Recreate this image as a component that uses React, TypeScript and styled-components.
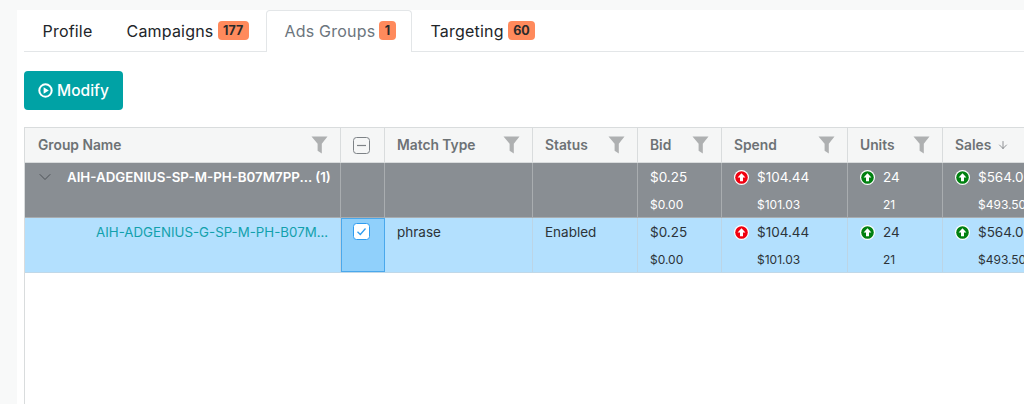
import { createGlobalStyle } from "styled-components";
import styled from "styled-components";
import { ChevronDown, ArrowDown } from "lucide-react";

const GlobalStyle = createGlobalStyle`
  html, body {
    margin: 0;
    padding: 0;
    background: #f8f9f9;
  }
  * {
    box-sizing: border-box;
  }
`;

const Page = styled.div`
  width: 1024px;
  height: 404px;
  overflow: hidden;
  padding: 17px 0 0 17px;
  font-family: Inter, "Liberation Sans", sans-serif;
`;

const Panel = styled.div`
  width: 1100px;
  height: 400px;
  background: #fff;
  padding-left: 7px;
`;

const TabBar = styled.div`
  display: flex;
  height: 42px;
  margin-top: -7px;
  border-bottom: 1px solid #e3e6e8;
  align-items: stretch;
`;

const Tab = styled.div<{ $active?: boolean; $w: number }>`
  width: ${(p) => p.$w}px;
  height: 42px;
  display: flex;
  align-items: center;
  gap: 4px;
  padding: 0 0 2px 17.5px;
  font-size: 16px;
  letter-spacing: 0.2px;
  color: ${(p) => (p.$active ? "#6c757d" : "#212529")};
  background: ${(p) => (p.$active ? "#fff" : "transparent")};
  border: 1px solid ${(p) => (p.$active ? "#e3e6e8" : "transparent")};
  border-bottom: none;
  border-radius: 4px 4px 0 0;
`;

const Badge = styled.span`
  height: 19px;
  padding: 0 5.5px;
  display: flex;
  align-items: center;
  background: #ff8a5c;
  border-radius: 4px;
  color: #2b2b2b;
  font-size: 12.5px;
  font-weight: 700;
  letter-spacing: 0;
`;

const Toolbar = styled.div`
  padding: 19px 0 17px;
`;

const ModifyButton = styled.button`
  width: 99px;
  height: 39px;
  display: flex;
  align-items: center;
  justify-content: center;
  gap: 4px;
  border: none;
  border-radius: 4px;
  background: #00a2a5;
  color: #fff;
  font-family: inherit;
  font-size: 15.5px;
  font-weight: 500;
`;

const Table = styled.div`
  width: 1075px;
  height: 300px;
  border-left: 1px solid #d9dcdd;
`;

const columns = "316px 44px 148px 105px 84px 126px 95px 160px";

const HeaderRow = styled.div`
  display: grid;
  grid-template-columns: ${columns};
  height: 36px;
  background: #f5f6f6;
  border-top: 1px solid #d9dcdd;
  border-bottom: 1px solid #d9dcdd;
`;

const HeaderCell = styled.div<{ $center?: boolean }>`
  display: flex;
  align-items: center;
  justify-content: ${(p) => (p.$center ? "center" : "space-between")};
  padding: ${(p) => (p.$center ? "0 3px 0 0" : "0 12px 0 12px")};
  border-right: 1px solid #d9dcdd;
  font-size: 13.8px;
  font-weight: 600;
  color: #6d7275;

  &:first-child {
    padding-left: 13px;
  }
`;

const SortLabel = styled.span`
  display: flex;
  align-items: center;
  gap: 6px;
`;

const Row = styled.div<{ $group?: boolean }>`
  display: grid;
  grid-template-columns: ${columns};
  height: 55px;
  background: ${(p) => (p.$group ? "#898e93" : "#b3e0fe")};
  color: ${(p) => (p.$group ? "#fff" : "#2c3338")};
  border-bottom: 1px solid ${(p) => (p.$group ? "#a9adb0" : "#c0d8e8")};
`;

const Cell = styled.div<{ $group?: boolean }>`
  padding: 5px 12px 0 12px;
  border-right: 1px solid ${(p) => (p.$group ? "#a9adb0" : "#bcd5e6")};
  font-size: 13.5px;
  line-height: 18px;
  min-width: 0;
`;

const CheckCell = styled.div`
  display: flex;
  justify-content: center;
  padding: 4px 3px 0 0;
  background: #90d0fb;
  border: 1px solid #4aa8ec;
`;

const NameCell = styled(Cell)<{ $indent: number }>`
  display: flex;
  align-items: flex-start;
  padding-left: ${(p) => p.$indent}px;
  font-size: 13.3px;
`;

const Chevron = styled(ChevronDown)`
  flex: none;
  margin: -1px 12px 0 0;
  color: #4d5257;
`;

const GroupName = styled.span`
  font-weight: 600;
  white-space: nowrap;
`;

const ChildName = styled.span`
  color: #12a0ac;
  white-space: nowrap;
`;

const ValueLine = styled.div`
  display: flex;
  align-items: center;
  gap: 8px;
  height: 18px;
`;

const SubLine = styled.div<{ $offset?: boolean }>`
  margin-top: 10.5px;
  font-size: 12px;
  line-height: 16px;
  padding-left: ${(p) => (p.$offset ? "23px" : "0")};
`;

const FilterIcon = () => (
  <svg width="17" height="18" viewBox="0 0 17 18">
    <path d="M0.5 0.5H16.5L10.8 7.8V17.5L6.6 14.8V7.8Z" fill="#aeb0b1" />
  </svg>
);

const PlayIcon = () => (
  <svg width="15" height="15" viewBox="0 0 15 15">
    <circle cx="7.5" cy="7.5" r="6.2" fill="none" stroke="#fff" strokeWidth="2" />
    <path d="M5.6 4.2L10.8 7.5L5.6 10.8Z" fill="#fff" />
  </svg>
);

const TrendIcon = ({ color }: { color: string }) => (
  <svg width="15" height="15" viewBox="0 0 15 15" style={{ flex: "none" }}>
    <circle cx="7.5" cy="7.5" r="7.5" fill="#fff" />
    <circle cx="7.5" cy="7.5" r="6.3" fill={color} />
    <path d="M7.5 3.2L11.4 7.4H9V11.2H6V7.4H3.6Z" fill="#fff" />
  </svg>
);

const BoxIcon = ({ checked }: { checked?: boolean }) => (
  <svg width="17" height="17" viewBox="0 0 17 17">
    <rect
      x="0.5"
      y="0.5"
      width="16"
      height="16"
      rx="3"
      fill={checked ? "#fff" : "none"}
      stroke={checked ? "#2e9cf0" : "#7d8286"}
    />
    {checked ? (
      <path d="M4.5 8.8L7.3 11.5L12.5 5.5" fill="none" stroke="#2e9cf0" strokeWidth="1.3" />
    ) : (
      <path d="M4 8.5H13" stroke="#7d8286" strokeWidth="1.2" />
    )}
  </svg>
);

const metrics = [
  { main: "$104.44", sub: "$101.03", color: "#f00010" },
  { main: "24", sub: "21", color: "#008010" },
  { main: "$564.00", sub: "$493.50", color: "#008010" },
];

const headers = ["Match Type", "Status", "Bid", "Spend", "Units"];

const DataRow = ({ group }: { group?: boolean }) => (
  <Row $group={group}>
    {group ? (
      <NameCell $group $indent={10}>
        <Chevron size={20} strokeWidth={1.2} />
        <GroupName>AIH-ADGENIUS-SP-M-PH-B07M7PP... (1)</GroupName>
      </NameCell>
    ) : (
      <NameCell $indent={71}>
        <ChildName>AIH-ADGENIUS-G-SP-M-PH-B07M...</ChildName>
      </NameCell>
    )}
    {group ? (
      <Cell $group />
    ) : (
      <CheckCell>
        <BoxIcon checked />
      </CheckCell>
    )}
    <Cell $group={group}>{group ? "" : "phrase"}</Cell>
    <Cell $group={group}>{group ? "" : "Enabled"}</Cell>
    <Cell $group={group}>
      <ValueLine>$0.25</ValueLine>
      <SubLine>$0.00</SubLine>
    </Cell>
    {metrics.map((m) => (
      <Cell $group={group} key={m.main}>
        <ValueLine>
          <TrendIcon color={m.color} />
          {m.main}
        </ValueLine>
        <SubLine $offset>{m.sub}</SubLine>
      </Cell>
    ))}
  </Row>
);

const App = () => {
  return (
    <Page>
      <GlobalStyle />
      <Panel>
        <TabBar>
          <Tab $w={84}>Profile</Tab>
          <Tab $w={158}>
            Campaigns <Badge>177</Badge>
          </Tab>
          <Tab $w={146} $active>
            Ads Groups <Badge>1</Badge>
          </Tab>
          <Tab $w={141}>
            Targeting <Badge>60</Badge>
          </Tab>
        </TabBar>
        <Toolbar>
          <ModifyButton>
            <PlayIcon />
            Modify
          </ModifyButton>
        </Toolbar>
        <Table>
          <HeaderRow>
            <HeaderCell>
              Group Name
              <FilterIcon />
            </HeaderCell>
            <HeaderCell $center>
              <BoxIcon />
            </HeaderCell>
            {headers.map((h) => (
              <HeaderCell key={h}>
                {h}
                <FilterIcon />
              </HeaderCell>
            ))}
            <HeaderCell>
              <SortLabel>
                Sales
                <ArrowDown size={12} strokeWidth={1.5} />
              </SortLabel>
            </HeaderCell>
          </HeaderRow>
          <DataRow group />
          <DataRow />
        </Table>
      </Panel>
    </Page>
  );
};

export default App;
